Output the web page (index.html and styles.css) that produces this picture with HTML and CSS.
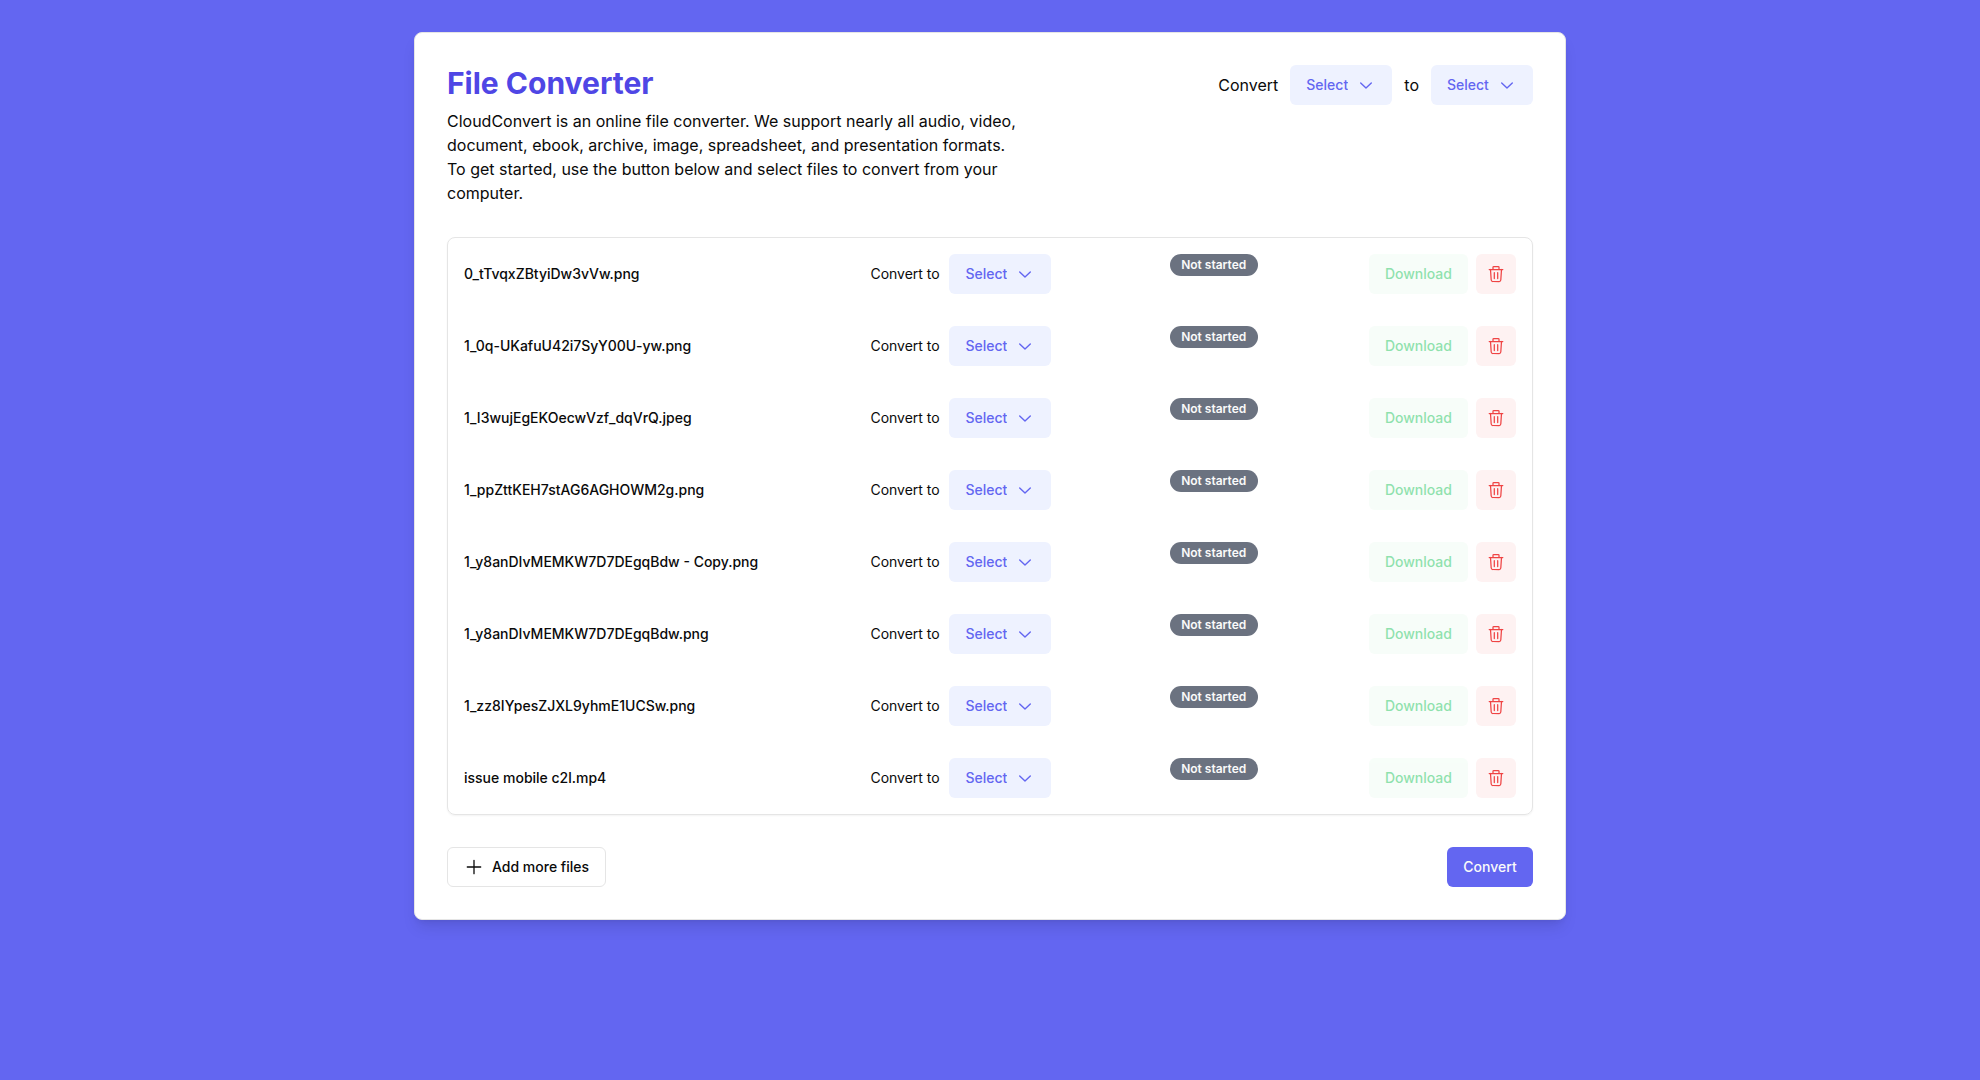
FILE: index.html
```html
<!DOCTYPE html>
<html lang="en">
<head>
<meta charset="utf-8">
<meta name="viewport" content="width=device-width, initial-scale=1">
<title>File Converter</title>
<link rel="stylesheet" href="styles.css">
</head>
<body>
<svg class="sprite" aria-hidden="true">
  <symbol id="chevron" viewBox="0 0 20 20"><path d="M4.700 8L10 13L15.300 8" fill="none" stroke="currentColor" stroke-width="1.400" stroke-linecap="round" stroke-linejoin="round"/></symbol>
  <symbol id="plus" viewBox="0 0 20 20"><path d="M10 3.300v13.400M3.300 10h13.400" fill="none" stroke="currentColor" stroke-width="1.300" stroke-linecap="round"/></symbol>
  <symbol id="trash" viewBox="0 0 20 20"><path d="M3.200 5.500H16.800M7 5.300V3.300a.8.8 0 0 1 .8-.8h4.400a.8.8 0 0 1 .8.8v2M4.500 5.500l.7 10.500a1.700 1.700 0 0 0 1.700 1.500h6.200a1.700 1.700 0 0 0 1.700-1.500l.7-10.500M8.300 8.700v5.800M11.700 8.700v5.800" fill="none" stroke="currentColor" stroke-width="1.250" stroke-linecap="round" stroke-linejoin="round"/></symbol>
</svg>
<main class="card">
  <header class="header">
    <div class="intro">
      <h1 class="title">File Converter</h1>
      <p class="description">CloudConvert is an online file converter. We support nearly all audio, video, document, ebook, archive, image, spreadsheet, and presentation formats. To get started, use the button below and select files to convert from your computer.</p>
    </div>
    <div class="convert-all">
      <label for="from">Convert</label>
      <span class="picker"><select id="from"><option>Select</option></select><svg class="icon"><use href="#chevron"/></svg></span>
      <label for="to">to</label>
      <span class="picker"><select id="to"><option>Select</option></select><svg class="icon"><use href="#chevron"/></svg></span>
    </div>
  </header>

  <ul class="files">
    <li class="file">
      <span class="name">0_tTvqxZBtyiDw3vVw.png</span>
      <div class="target"><label for="f1">Convert to</label><span class="picker"><select id="f1"><option>Select</option></select><svg class="icon"><use href="#chevron"/></svg></span></div>
      <span class="badge">Not started</span>
      <div class="actions"><button class="btn download" disabled>Download</button><button class="btn remove" aria-label="Remove"><svg class="icon"><use href="#trash"/></svg></button></div>
    </li>
    <li class="file">
      <span class="name">1_0q-UKafuU42i7SyY00U-yw.png</span>
      <div class="target"><label for="f2">Convert to</label><span class="picker"><select id="f2"><option>Select</option></select><svg class="icon"><use href="#chevron"/></svg></span></div>
      <span class="badge">Not started</span>
      <div class="actions"><button class="btn download" disabled>Download</button><button class="btn remove" aria-label="Remove"><svg class="icon"><use href="#trash"/></svg></button></div>
    </li>
    <li class="file">
      <span class="name">1_I3wujEgEKOecwVzf_dqVrQ.jpeg</span>
      <div class="target"><label for="f3">Convert to</label><span class="picker"><select id="f3"><option>Select</option></select><svg class="icon"><use href="#chevron"/></svg></span></div>
      <span class="badge">Not started</span>
      <div class="actions"><button class="btn download" disabled>Download</button><button class="btn remove" aria-label="Remove"><svg class="icon"><use href="#trash"/></svg></button></div>
    </li>
    <li class="file">
      <span class="name">1_ppZttKEH7stAG6AGHOWM2g.png</span>
      <div class="target"><label for="f4">Convert to</label><span class="picker"><select id="f4"><option>Select</option></select><svg class="icon"><use href="#chevron"/></svg></span></div>
      <span class="badge">Not started</span>
      <div class="actions"><button class="btn download" disabled>Download</button><button class="btn remove" aria-label="Remove"><svg class="icon"><use href="#trash"/></svg></button></div>
    </li>
    <li class="file">
      <span class="name">1_y8anDIvMEMKW7D7DEgqBdw - Copy.png</span>
      <div class="target"><label for="f5">Convert to</label><span class="picker"><select id="f5"><option>Select</option></select><svg class="icon"><use href="#chevron"/></svg></span></div>
      <span class="badge">Not started</span>
      <div class="actions"><button class="btn download" disabled>Download</button><button class="btn remove" aria-label="Remove"><svg class="icon"><use href="#trash"/></svg></button></div>
    </li>
    <li class="file">
      <span class="name">1_y8anDIvMEMKW7D7DEgqBdw.png</span>
      <div class="target"><label for="f6">Convert to</label><span class="picker"><select id="f6"><option>Select</option></select><svg class="icon"><use href="#chevron"/></svg></span></div>
      <span class="badge">Not started</span>
      <div class="actions"><button class="btn download" disabled>Download</button><button class="btn remove" aria-label="Remove"><svg class="icon"><use href="#trash"/></svg></button></div>
    </li>
    <li class="file">
      <span class="name">1_zz8IYpesZJXL9yhmE1UCSw.png</span>
      <div class="target"><label for="f7">Convert to</label><span class="picker"><select id="f7"><option>Select</option></select><svg class="icon"><use href="#chevron"/></svg></span></div>
      <span class="badge">Not started</span>
      <div class="actions"><button class="btn download" disabled>Download</button><button class="btn remove" aria-label="Remove"><svg class="icon"><use href="#trash"/></svg></button></div>
    </li>
    <li class="file">
      <span class="name">issue mobile c2l.mp4</span>
      <div class="target"><label for="f8">Convert to</label><span class="picker"><select id="f8"><option>Select</option></select><svg class="icon"><use href="#chevron"/></svg></span></div>
      <span class="badge">Not started</span>
      <div class="actions"><button class="btn download" disabled>Download</button><button class="btn remove" aria-label="Remove"><svg class="icon"><use href="#trash"/></svg></button></div>
    </li>
  </ul>

  <footer class="footer">
    <button class="btn add"><svg class="icon"><use href="#plus"/></svg>Add more files</button>
    <button class="btn primary">Convert</button>
  </footer>
</main>
</body>
</html>
```
FILE: styles.css
```css
*,
*::before,
*::after {
  box-sizing: border-box;
}

body {
  margin: 0;
  padding: 32px;
  background: #6366f1;
  color: #0a0a0a;
  font: 400 16px/24px Inter, "Liberation Sans", sans-serif;
}

h1,
p,
ul {
  margin: 0;
  padding: 0;
}

.sprite {
  display: none;
}

.card {
  display: flex;
  flex-direction: column;
  gap: 32px;
  max-width: 1152px;
  margin: 0 auto;
  padding: 32px;
  background: #fff;
  border: 1px solid #e5e5e5;
  border-radius: 8px;
  box-shadow: 0 10px 15px -3px rgb(0 0 0 / 0.1), 0 4px 6px -4px rgb(0 0 0 / 0.1);
}

.header {
  display: flex;
  justify-content: space-between;
  align-items: flex-start;
  gap: 32px;
}

.intro {
  display: grid;
  gap: 8px;
  max-width: 576px;
}

.title {
  color: #4f46e5;
  font-size: 30px;
  line-height: 36px;
  font-weight: 700;
}

.convert-all {
  display: flex;
  align-items: center;
  gap: 12px;
}

.picker {
  display: inline-grid;
  align-items: center;
  color: #6366f1;
}

.picker select {
  grid-area: 1 / 1;
  appearance: none;
  min-width: 102px;
  height: 40px;
  margin: 0;
  padding: 0 44px 0 16px;
  border: 0;
  border-radius: 6px;
  background: #eef2ff;
  color: inherit;
  font: 500 14px/20px Inter, "Liberation Sans", sans-serif;
  cursor: pointer;
}

.picker .icon {
  grid-area: 1 / 1;
  justify-self: end;
  margin-right: 16px;
  pointer-events: none;
}

.icon {
  width: 20px;
  height: 20px;
}

.files {
  list-style: none;
  border: 1px solid #e5e5e5;
  border-radius: 8px;
  box-shadow: 0 1px 2px rgb(0 0 0 / 0.05);
}

.file {
  display: grid;
  grid-template-columns: 406fr 299fr 199fr auto;
  align-items: center;
  padding: 16px;
  font-size: 14px;
  line-height: 20px;
}

.name {
  font-weight: 500;
}

.target,
.actions {
  display: flex;
  align-items: center;
  gap: 8px;
}

.target label {
  min-width: 71px;
}

.badge {
  align-self: start;
  justify-self: start;
  min-width: 88px;
  padding: 2px 10px;
  border: 1px solid transparent;
  border-radius: 11px;
  background: #6b7280;
  color: #fafafa;
  font-size: 12px;
  line-height: 16px;
  font-weight: 600;
  text-align: center;
}

.btn {
  display: inline-flex;
  align-items: center;
  justify-content: center;
  gap: 8px;
  height: 40px;
  padding: 0 16px;
  border: 0;
  border-radius: 6px;
  font: 500 14px/20px Inter, "Liberation Sans", sans-serif;
  cursor: pointer;
}

.download {
  background: #f0fdf4;
  color: #22c55e;
  opacity: 0.5;
}

.remove {
  width: 40px;
  padding: 0;
  background: #fef2f2;
  color: #ef4444;
}

.footer {
  display: flex;
  justify-content: space-between;
}

.add {
  border: 1px solid #e5e5e5;
  background: #fff;
  color: #0a0a0a;
}

.primary {
  min-width: 86px;
  background: #6366f1;
  color: #fafafa;
}
```
